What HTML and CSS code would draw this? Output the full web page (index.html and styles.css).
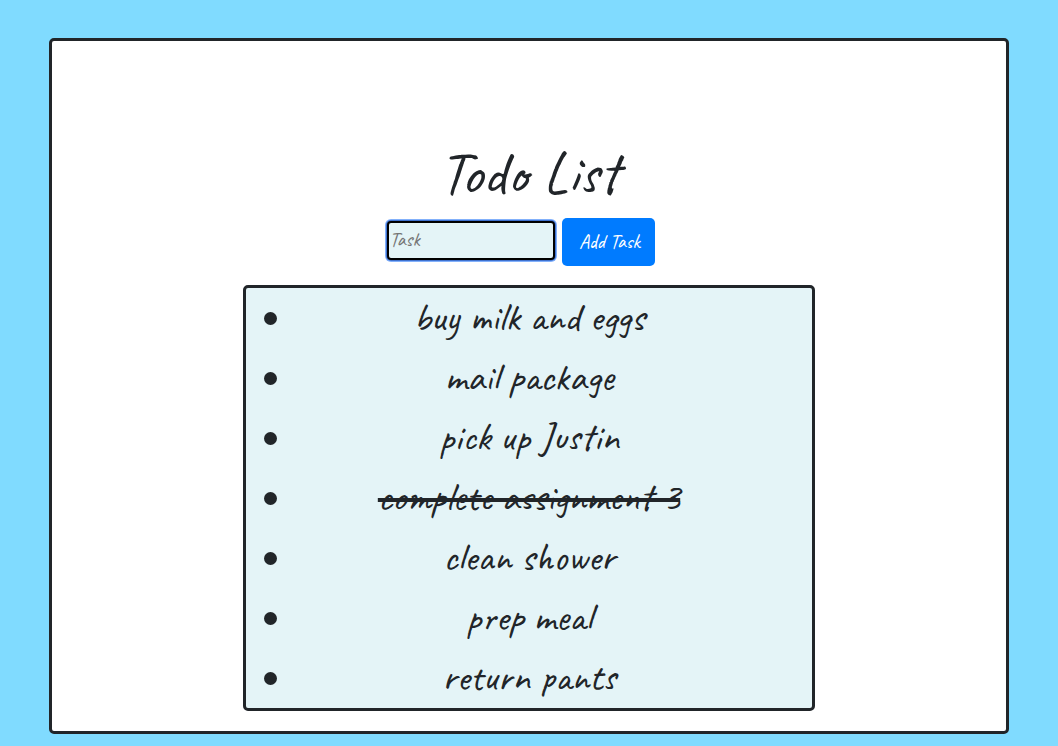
FILE: index.html
```html
<!DOCTYPE html>
<html lang="en">
<head>
<meta charset="utf-8">
<title>Todo List</title>
<link rel="stylesheet" href="styles.css">
</head>
<body>
<main class="container">
  <h1 class="title">Todo List</h1>
  <form class="task-form">
    <input class="task-input" type="text" placeholder="Task">
    <button class="add-button" type="button">Add Task</button>
  </form>
  <ul class="list">
    <li class="item"><span class="label">buy milk and eggs</span></li>
    <li class="item"><span class="label">mail package</span></li>
    <li class="item"><span class="label">pick up Justin</span></li>
    <li class="item"><span class="label done">complete assignment 3</span></li>
    <li class="item"><span class="label">clean shower</span></li>
    <li class="item"><span class="label">prep meal</span></li>
    <li class="item"><span class="label">return pants</span></li>
  </ul>
</main>
</body>
</html>
```
FILE: styles.css
```css
* { box-sizing: border-box; }
body {
  margin: 0;
  height: 746px;
  padding: 38px 49px 12px;
  overflow: hidden;
  background: #80dbff;
  color: #212529;
  font-family: Caveat, cursive;
}
.container {
  height: 696px;
  padding-top: 96px;
  border: 3px solid #212529;
  border-radius: 5px;
  background: #fff;
}
.title { margin: 0; font-size: 60px; line-height: 72px; font-weight: 400; text-align: center; }
.task-form { display: flex; justify-content: center; gap: 7px; margin: 9px 0 19px; padding-right: 17px; height: 48px; }
.task-input {
  width: 168px;
  height: 39px;
  margin-top: 3px;
  padding: 0 1px 3px;
  border: 2px solid #000;
  border-radius: 4px;
  outline: none;
  box-shadow: 0 0 0 1px #3f72cf, 0 0 0 2px #83b1fb;
  background: #e4f4f7;
  color: #212529;
  font: 20px/30px Caveat, cursive;
}
.task-input::placeholder { color: #757575; }
.add-button {
  width: 93px;
  padding: 0 0 0 3px;
  border: 0;
  border-radius: 5px;
  background: #007bff;
  color: #fff;
  font: 400 20px/30px Caveat, cursive;
}
.list {
  width: 572px;
  height: 426px;
  margin: 0 auto;
  padding: 0 18px;
  border: 3px solid #212529;
  border-radius: 5px;
  background: #e4f4f7;
  list-style: none;
}
.item {
  display: flex;
  align-items: center;
  height: 60px;
  padding-right: 13px;
  font-size: 40px;
  line-height: 60px;
}
.item::before {
  content: "";
  width: 13px;
  height: 13px;
  border-radius: 50%;
  background: #212529;
}
.label { margin: 0 auto; padding-bottom: 2px; line-height: 58px; }
.done {
  text-decoration: underline 4px;
  text-underline-offset: -12px;
  text-decoration-skip-ink: none;
}
```
